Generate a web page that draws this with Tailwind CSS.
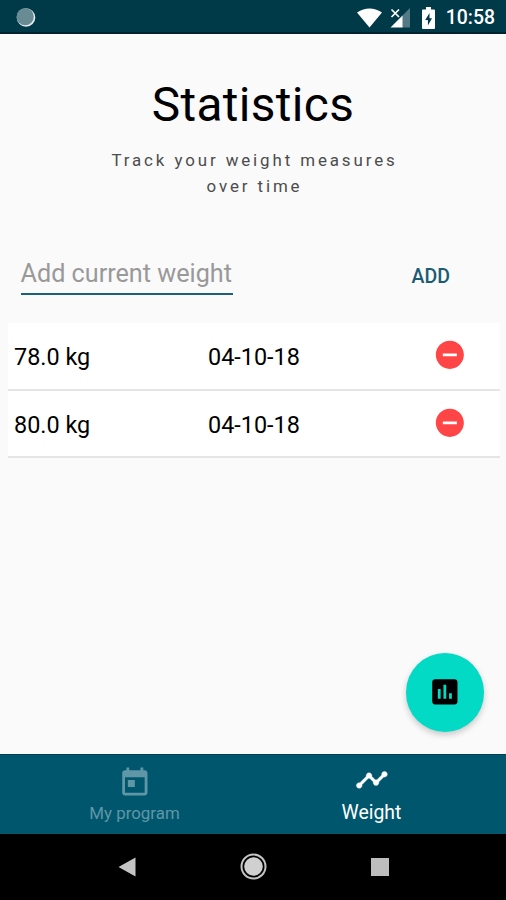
<!DOCTYPE html>
<html lang="en">
<head>
<meta charset="utf-8">
<title>Statistics</title>
<script src="https://cdn.jsdelivr.net/npm/@tailwindcss/browser@4"></script>
</head>
<body class="w-[506px] h-[900px] overflow-hidden bg-[#fafafa] font-[Roboto,sans-serif] text-black flex flex-col whitespace-nowrap">
<header class="h-[34px] shrink-0 bg-[#003a49] border-b-2 border-[#00222e] flex items-center justify-between pl-4 pr-[11px] pt-[3px] text-white">
  <svg class="size-5" viewBox="0 0 20 20"><circle cx="10" cy="9.5" r="9.3" fill="#e4edef"/><circle cx="9.2" cy="8.7" r="8.6" fill="#688b94"/></svg>
  <div class="flex items-center">
    <svg class="w-[25px] h-[20px] mr-[8px]" viewBox="0 0 25 20"><path d="M0 4.600Q12.500-3.400 25 4.600L12.500 19.500Z" fill="#fff"/></svg>
    <svg class="w-[20px] h-[20px] mr-[12px]" viewBox="0 0 20 20"><path d="M20 0V19.500H12V8Z" fill="#527984"/><path d="M12.500 7.500V19.500H.5Z" fill="#fff"/><path d="M1.500 1.500L9 9M9 1.500L1.500 9" stroke="#fff" stroke-width="1.700"/></svg>
    <svg class="w-[13px] h-[22px] mr-[11px]" viewBox="0 0 13 22"><path d="M4 0h5v2.500h3q1 0 1 1V21q0 1-1 1H1q-1 0-1-1V3.500q0-1 1-1h3z" fill="#fff"/><path d="M7.500 6L3.200 13h2.700v5.500L10 11.200H7.500Z" fill="#003a49"/></svg>
    <span class="text-[19.400px] leading-[22px] font-medium pt-[1px]">10:58</span>
  </div>
</header>
<main class="h-[720px] shrink-0 relative">
  <h1 class="pt-[41px] text-center text-[47.800px] leading-[60px] tracking-[0.350px]">Statistics</h1>
  <p class="pt-[13px] pl-[3px] text-center text-[16.900px] leading-[25.500px] tracking-[2.900px] text-[#4c4c4c]">Track your weight measures<br>over time</p>
  <div class="mt-[56px] pl-[20.500px] pr-[56px] flex items-start justify-between">
    <div class="w-[212px] h-[40px] border-b-2 border-[#1d6078] text-[25.200px] leading-[37px] text-[#999]">Add current weight</div>
    <div class="pt-[9px] text-[19.500px] leading-[25px] font-medium text-[#1b5b73]">ADD</div>
  </div>
  <div class="mt-[28px] ml-[8px] mr-[6px] text-[23.400px]">
    <div class="h-[67.500px] bg-white border-b-2 border-[#e5e5e5] flex items-center pl-[6px]">
      <span class="w-[194px] pt-[4px]">78.0 kg</span><span class="w-[225px] pt-[4px]">04-10-18</span>
      <svg class="size-[33.700px] -mt-[1.500px]" viewBox="0 0 24 24" fill="#ff4545"><path d="M12 2C6.480 2 2 6.480 2 12s4.480 10 10 10 10-4.480 10-10S17.520 2 12 2zm5 11H7v-2h10v2z"/></svg>
    </div>
    <div class="h-[67.500px] bg-white border-b-2 border-[#e5e5e5] flex items-center pl-[6px]">
      <span class="w-[194px] pt-[4px]">80.0 kg</span><span class="w-[225px] pt-[4px]">04-10-18</span>
      <svg class="size-[33.700px] -mt-[1.500px]" viewBox="0 0 24 24" fill="#ff4545"><path d="M12 2C6.480 2 2 6.480 2 12s4.480 10 10 10 10-4.480 10-10S17.520 2 12 2zm5 11H7v-2h10v2z"/></svg>
    </div>
  </div>
  <div class="absolute right-[22px] bottom-[22.500px] size-[78.500px] rounded-full bg-[#03dac5] flex items-center justify-center shadow-[0_3px_6px_rgba(0,0,0,0.2)]">
    <svg class="size-[33.700px]" viewBox="0 0 24 24"><path d="M19 3H5c-1.100 0-2 .9-2 2v14c0 1.100.9 2 2 2h14c1.100 0 2-.9 2-2V5c0-1.100-.9-2-2-2zM9 17H7v-7h2v7zm4 0h-2V7h2v10zm4 0h-2v-4h2v4z"/></svg>
  </div>
</main>
<nav class="h-[79.500px] shrink-0 bg-[#00566d] border-t border-[#003e55] flex">
  <div class="w-[269px] flex flex-col items-center pt-[10.500px] text-[#5f97a6]">
    <svg class="size-[33.700px]" viewBox="0 0 24 24" fill="currentColor"><path d="M19 3h-1V1h-2v2H8V1H6v2H5c-1.110 0-2 .9-2 2v14c0 1.100.89 2 2 2h14c1.100 0 2-.9 2-2V5c0-1.100-.9-2-2-2zm0 16H5V8h14v11zM7 10h5v5H7z"/></svg>
    <span class="text-[16.900px] leading-[20px] mt-[4px]">My program</span>
  </div>
  <div class="w-[205px] flex flex-col items-center pt-[8px] text-white">
    <svg class="size-[33.700px]" viewBox="0 0 24 24" fill="currentColor" stroke="currentColor" stroke-width="0.300"><path d="M23 8c0 1.100-.9 2-2 2-.18 0-.35-.02-.51-.07l-3.560 3.550c.05.16.07.34.07.52 0 1.100-.9 2-2 2s-2-.9-2-2c0-.18.020-.36.070-.52l-2.550-2.550c-.16.050-.34.070-.52.070s-.36-.02-.52-.07l-4.550 4.560c.05.16.07.33.07.51 0 1.100-.9 2-2 2s-2-.9-2-2 .9-2 2-2c.18 0 .35.020.51.070l4.560-4.550C8.020 9.360 8 9.180 8 9c0-1.100.9-2 2-2s2 .9 2 2c0 .18-.02.36-.07.52l2.550 2.550c.16-.05.34-.07.52-.07s.36.020.52.070l3.550-3.560C19.020 8.350 19 8.180 19 8c0-1.100.9-2 2-2s2 .9 2 2z"/></svg>
    <span class="text-[19.400px] leading-[22px] mt-[5px]">Weight</span>
  </div>
</nav>
<footer class="flex-1 bg-black relative flex items-center justify-between pl-[118px] pr-[117px]">
  <svg class="w-[18px] h-[20px]" viewBox="0 0 18 20"><path d="M17.500.5V19.500L.5 10Z" fill="#c4c4c4"/></svg>
  <svg class="size-[27px]" viewBox="0 0 27 27"><circle cx="13.500" cy="13.500" r="12" fill="none" stroke="#c4c4c4" stroke-width="2"/><circle cx="13.500" cy="13.500" r="9.300" fill="#d0d0d0"/></svg>
  <div class="size-[18px] bg-[#bdbdbd]"></div>
</footer>
</body>
</html>
